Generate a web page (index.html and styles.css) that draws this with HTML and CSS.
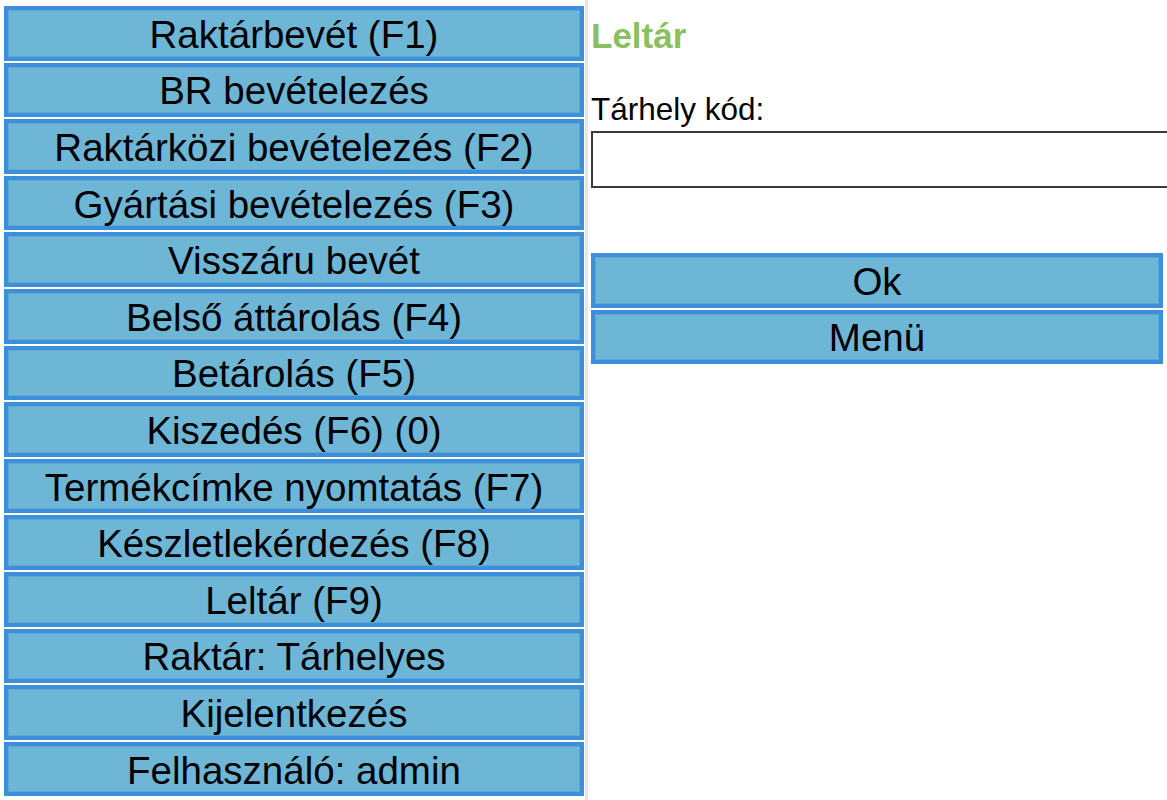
FILE: index.html
```html
<!DOCTYPE html>
<html lang="hu">
<head>
  <meta charset="UTF-8" />
  <meta name="viewport" content="width=device-width, initial-scale=1.0"/>
  <title>Leltár</title>
  <link rel="stylesheet" href="styles.css">
</head>
<body>
  <div class="layout">
    <nav class="sidebar">
      <button class="menu-btn">Raktárbevét (F1)</button>
      <button class="menu-btn">BR bevételezés</button>
      <button class="menu-btn">Raktárközi bevételezés (F2)</button>
      <button class="menu-btn">Gyártási bevételezés (F3)</button>
      <button class="menu-btn">Visszáru bevét</button>
      <button class="menu-btn">Belső áttárolás (F4)</button>
      <button class="menu-btn">Betárolás (F5)</button>
      <button class="menu-btn">Kiszedés (F6) (0)</button>
      <button class="menu-btn">Termékcímke nyomtatás (F7)</button>
      <button class="menu-btn">Készletlekérdezés (F8)</button>
      <button class="menu-btn">Leltár (F9)</button>
      <button class="menu-btn">Raktár: Tárhelyes</button>
      <button class="menu-btn">Kijelentkezés</button>
      <button class="menu-btn">Felhasználó: admin</button>
    </nav>

    <main class="main">
      <h1 class="title">Leltár</h1>

      <label for="tarhely" class="field-label">Tárhely kód:</label>
      <input type="text" id="tarhely" class="field-input" />

      <div class="actions">
        <button class="menu-btn">Ok</button>
        <button class="menu-btn">Menü</button>
      </div>
    </main>
  </div>
</body>
</html>
```

FILE: styles.css
```css
html, body {
  margin: 0;
  padding: 0;
  background: #ffffff;
  overflow: hidden;
}

body {
  font-family: "Liberation Sans", Arial, sans-serif;
  color: #000;
}

.layout {
  display: flex;
  width: 1167px;
  height: 800px;
}

.sidebar {
  display: flex;
  flex-direction: column;
  width: 580px;
  flex-shrink: 0;
  padding: 6px 1px 0 4px;
  border-right: 3px solid #e6e6e6;
}

.menu-btn {
  display: flex;
  align-items: center;
  justify-content: center;
  box-sizing: border-box;
  width: 100%;
  height: 54.6px;
  margin: 0 0 2px 0;
  padding: 3px 0 0 0;
  font-family: "Liberation Sans", Arial, sans-serif;
  font-size: 38.5px;
  white-space: nowrap;
  color: #000;
  background-color: #6db6d6;
  border: 4px solid #3c8fd8;
  box-shadow: inset 0 0 0 1px #5ea8d5;
  border-radius: 0;
  cursor: pointer;
}

.main {
  flex: 1;
  min-width: 0;
  padding: 16px 4px 0 3px;
  overflow: hidden;
}

.title {
  margin: 0;
  font-size: 35px;
  line-height: 40px;
  font-weight: bold;
  color: #8cbf5f;
}

.field-label {
  display: block;
  margin-top: 35px;
  font-size: 31.5px;
  line-height: 36px;
}

.field-input {
  display: block;
  box-sizing: border-box;
  width: 620px;
  height: 57px;
  margin: 4px 0 0 0;
  border: 2px solid #3a3a3a;
  font-size: 30px;
  padding: 0 8px;
}

.actions {
  margin-top: 65px;
}
```
